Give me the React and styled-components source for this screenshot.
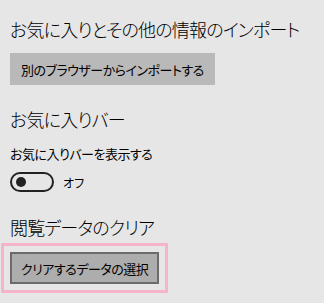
import React from 'react';
import styled, { createGlobalStyle } from 'styled-components';

const GlobalStyle = createGlobalStyle`
	html, body {
		margin: 0;
		padding: 0;
		background: #e6e6e6;
	}
	body {
		font-family: "Noto Sans CJK JP", "Noto Sans", sans-serif;
		font-feature-settings: "palt";
		color: #000;
	}
`;

const Page = styled.div`
	width: 324px;
	height: 303px;
	box-sizing: border-box;
	padding: 15px 10px 0;
	display: flex;
	flex-direction: column;
	align-items: flex-start;
	overflow: hidden;
`;

const Heading = styled.h2`
	margin: ${(p) => p.$top || 0}px 0 0;
	font-size: 18px;
	line-height: 28px;
	font-weight: 300;
	letter-spacing: -0.8px;
	white-space: nowrap;
`;

const Label = styled.div`
	margin-top: 11px;
	font-size: 13px;
	line-height: 20px;
	letter-spacing: -0.5px;
	white-space: nowrap;
`;

const Button = styled.button`
	margin-top: ${(p) => p.$top || 0}px;
	height: 32px;
	padding: 0 ${(p) => (p.$focused ? 9 : 11)}px;
	box-sizing: border-box;
	font-family: inherit;
	font-feature-settings: "palt";
	font-size: 13px;
	letter-spacing: -0.5px;
	color: #000;
	background: ${(p) => (p.$focused ? '#adadad' : '#b9b9b9')};
	border: ${(p) => (p.$focused ? '2px solid #6b6b6b' : 'none')};
	outline: ${(p) => (p.$focused ? '3px solid #f5b4c9' : 'none')};
	outline-offset: 6px;
	white-space: nowrap;
`;

const ToggleRow = styled.div`
	margin-top: 8px;
	display: flex;
	align-items: center;
	gap: 9px;
	font-size: 12px;
`;

const Track = styled.div`
	width: 44px;
	height: 20px;
	box-sizing: border-box;
	border: 2px solid #222;
	border-radius: 10px;
	display: flex;
	align-items: center;
	padding-left: 4px;
`;

const Knob = styled.span`
	width: 10px;
	height: 10px;
	border-radius: 50%;
	background: #222;
`;

export default function App() {
	return (
		<>
			<GlobalStyle />
			<Page>
				<Heading>お気に入りとその他の情報のインポート</Heading>
				<Button $top={10}>別のブラウザーからインポートする</Button>
				<Heading $top={20}>お気に入りバー</Heading>
				<Label>お気に入りバーを表示する</Label>
				<ToggleRow>
					<Track>
						<Knob />
					</Track>
					<span>オフ</span>
				</ToggleRow>
				<Heading $top={21}>閲覧データのクリア</Heading>
				<Button $top={11} $focused>
					クリアするデータの選択
				</Button>
			</Page>
		</>
	);
}
